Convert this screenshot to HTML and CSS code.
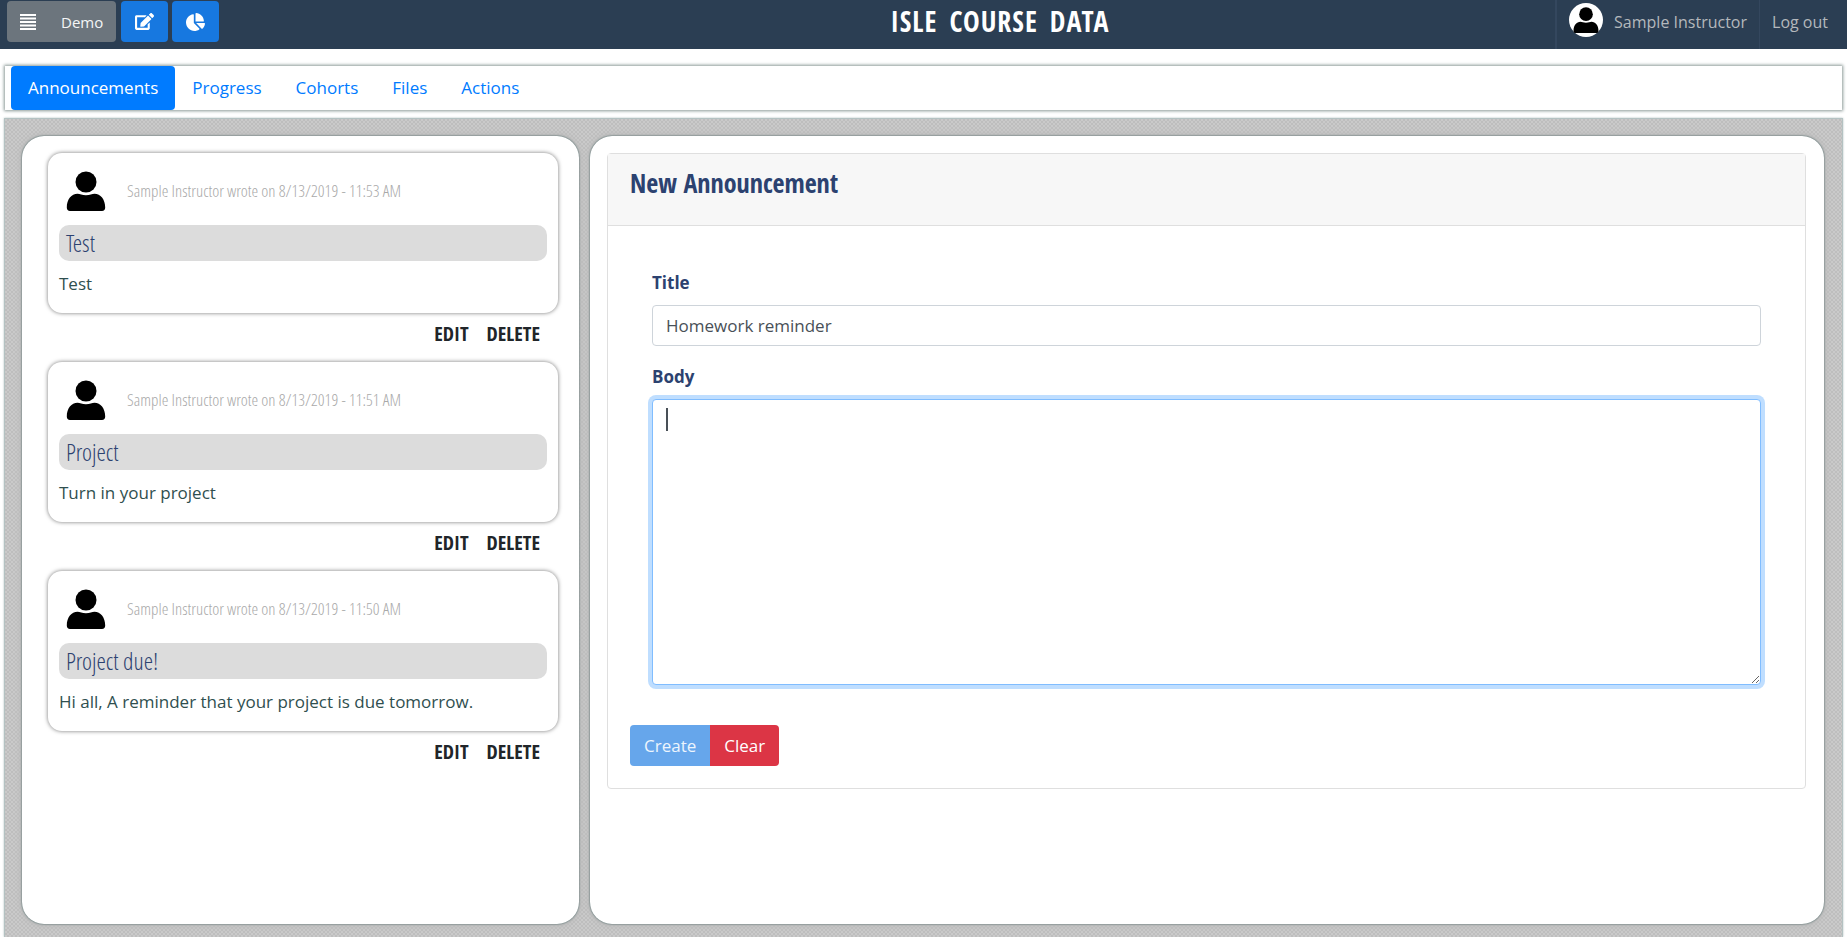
FILE: index.html
```html
<!DOCTYPE html>
<html lang="en">
<head>
<meta charset="utf-8">
<title>ISLE Course Data</title>
<link rel="stylesheet" href="styles.css">
</head>
<body>
<svg class="symbols" aria-hidden="true">
  <symbol id="person" viewBox="0 0 40 40">
    <circle cx="20" cy="11" r="10.5"/>
    <path d="M4 40C2 40 .8 38.800 .8 36.500C.8 28.500 5.500 22.800 11.500 22.800C14 22.800 16 24.300 20 24.300C24 24.300 26 22.800 28.500 22.800C34.500 22.800 39.200 28.500 39.200 36.500C39.200 38.800 38 40 36 40Z"/>
  </symbol>
</svg>

<header class="topbar">
  <div class="topbar-tools">
    <button class="tool tool-demo" type="button">
      <svg class="icon-list" viewBox="0 0 16 16" aria-hidden="true"><path d="M0 0h16v2H0zM0 3.500h16v2H0zM0 7h16v2H0zM0 10.500h16v2H0zM0 14h16v2H0z"/></svg>
      <span>Demo</span>
    </button>
    <button class="tool tool-blue" type="button" aria-label="Edit">
      <svg class="icon-edit" viewBox="0 0 576 512" aria-hidden="true"><path d="M402.600 83.200l90.200 90.200c3.800 3.800 3.800 10 0 13.800L274.400 405.600l-92.800 10.300c-12.400 1.400-22.900-9.100-21.500-21.500l10.300-92.800L388.800 83.200c3.800-3.800 10-3.800 13.800 0zm162-22.900l-48.800-48.800c-15.200-15.200-39.900-15.200-55.200 0l-35.400 35.400c-3.800 3.800-3.800 10 0 13.800l90.200 90.200c3.800 3.800 10 3.800 13.800 0l35.400-35.400c15.200-15.300 15.200-40 0-55.200zM384 346.200V448H64V128h229.800c3.200 0 6.200-1.300 8.500-3.500l40-40c7.600-7.600 2.200-20.500-8.500-20.500H48C21.500 64 0 85.500 0 112v352c0 26.500 21.500 48 48 48h352c26.500 0 48-21.500 48-48V306.200c0-10.700-12.900-16-20.500-8.500l-40 40c-2.200 2.300-3.500 5.300-3.500 8.500z"/></svg>
    </button>
    <button class="tool tool-blue" type="button" aria-label="Statistics">
      <svg class="icon-pie" viewBox="0 0 544 512" aria-hidden="true"><path d="M527.790 288H290.500l158.030 158.030c6.040 6.040 15.980 6.530 22.190.68 38.700-36.460 65.320-85.610 73.130-140.860 1.340-9.460-6.510-17.850-16.060-17.850zm-15.830-64.800C503.720 103.740 408.260 8.280 288.800.040 279.680-.59 272 7.100 272 16.240V240h223.770c9.140 0 16.820-7.680 16.190-16.800zM224 288V50.710c0-9.550-8.390-17.400-17.840-16.060C86.990 51.490-4.100 155.600.14 280.370 4.500 408.510 114.830 513.590 243.030 511.980c50.400-.63 96.970-16.870 135.260-44.030 7.900-5.600 8.420-17.230 1.570-24.080L224 288z"/></svg>
    </button>
  </div>
  <h1 class="topbar-title">ISLE COURSE DATA</h1>
  <div class="topbar-user">
    <a class="user-link" href="#profile">
      <span class="user-avatar"><svg viewBox="0 0 40 40" aria-hidden="true"><use href="#person"/></svg></span>
      Sample Instructor
    </a>
    <a class="user-link user-logout" href="#logout">Log out</a>
  </div>
</header>

<nav class="tabs">
  <a class="tab tab-active" href="#announcements">Announcements</a>
  <a class="tab" href="#progress">Progress</a>
  <a class="tab" href="#cohorts">Cohorts</a>
  <a class="tab" href="#files">Files</a>
  <a class="tab" href="#actions">Actions</a>
</nav>

<main class="board">
  <section class="panel feed">
    <article class="post">
      <div class="post-card">
        <div class="post-head">
          <svg class="post-avatar" viewBox="0 0 40 40" aria-hidden="true"><use href="#person"/></svg>
          <span>Sample Instructor wrote on 8/13/2019 - 11:53 AM</span>
        </div>
        <h2 class="post-title">Test</h2>
        <p class="post-body">Test</p>
      </div>
      <div class="post-actions"><button type="button">EDIT</button><button type="button">DELETE</button></div>
    </article>
    <article class="post">
      <div class="post-card">
        <div class="post-head">
          <svg class="post-avatar" viewBox="0 0 40 40" aria-hidden="true"><use href="#person"/></svg>
          <span>Sample Instructor wrote on 8/13/2019 - 11:51 AM</span>
        </div>
        <h2 class="post-title">Project</h2>
        <p class="post-body">Turn in your project</p>
      </div>
      <div class="post-actions"><button type="button">EDIT</button><button type="button">DELETE</button></div>
    </article>
    <article class="post">
      <div class="post-card">
        <div class="post-head">
          <svg class="post-avatar" viewBox="0 0 40 40" aria-hidden="true"><use href="#person"/></svg>
          <span>Sample Instructor wrote on 8/13/2019 - 11:50 AM</span>
        </div>
        <h2 class="post-title">Project due!</h2>
        <p class="post-body">Hi all, A reminder that your project is due tomorrow.</p>
      </div>
      <div class="post-actions"><button type="button">EDIT</button><button type="button">DELETE</button></div>
    </article>
  </section>

  <section class="panel editor">
    <form class="form-card">
      <h2 class="form-header">New Announcement</h2>
      <div class="form-fields">
        <label class="field-label" for="title">Title</label>
        <input class="field" id="title" type="text" value="Homework reminder">
        <label class="field-label" for="body">Body</label>
        <div class="field-wrap">
          <textarea class="field field-body field-focused" id="body"></textarea>
          <span class="caret"></span>
        </div>
      </div>
      <div class="form-actions">
        <button class="btn btn-create" type="button" disabled>Create</button><button class="btn btn-clear" type="button">Clear</button>
      </div>
    </form>
  </section>
</main>
</body>
</html>
```
FILE: styles.css
```css
* {
  box-sizing: border-box;
}

body {
  margin: 0;
  min-height: 100vh;
  display: flex;
  flex-direction: column;
  background: #fff;
  font-family: "Open Sans", sans-serif;
  font-size: 17px;
  line-height: 26px;
  color: #2f4f4f;
}

h1, h2, p {
  margin: 0;
}

a {
  text-decoration: none;
}

button, input, textarea {
  font: inherit;
}

.symbols {
  display: none;
}

/* Top bar */
.topbar {
  display: grid;
  grid-template-columns: 891fr auto 738fr;
  height: 49px;
  background: #2b3e53;
}

.topbar-tools {
  display: flex;
  align-items: flex-start;
  gap: 4px;
  padding: 1px 7px;
}

.tool {
  display: flex;
  align-items: center;
  justify-content: center;
  height: 41px;
  padding: 0;
  border: 0;
  border-radius: 4px;
  color: #f4f5f6;
  fill: #fff;
}

.tool-demo {
  gap: 25px;
  padding: 0 13px;
  margin-right: 1px;
  background: #6c757d;
  font-size: 15px;
}

.tool-blue {
  width: 47px;
  background: #1778e0;
}

.icon-list {
  width: 16px;
  height: 16px;
}

.icon-edit {
  width: 19px;
  height: 17px;
}

.icon-pie {
  width: 19px;
  height: 18px;
}

.topbar-title {
  font-family: "Open Sans Condensed", "Open Sans", sans-serif;
  font-size: 28px;
  font-weight: 700;
  line-height: 42px;
  letter-spacing: 1px;
  word-spacing: 4px;
  color: #fff;
}

.topbar-user {
  display: flex;
  justify-content: flex-end;
}

.user-link {
  display: flex;
  gap: 11px;
  padding: 0 12px;
  border-left: 2px solid #34475e;
  font-size: 16px;
  line-height: 44px;
  color: #b4b8bc;
}

.user-logout {
  padding-right: 19px;
  border-left-width: 1px;
}

.user-avatar {
  display: grid;
  place-items: center;
  width: 34px;
  height: 34px;
  margin-top: 3px;
  border-radius: 50%;
  background: #fff;
  fill: #000;
}

.user-avatar svg {
  width: 26px;
  height: 26px;
}

/* Tabs */
.tabs {
  display: flex;
  margin: 17px 5px 0;
  padding: 0 6px;
  background: #fff;
  box-shadow: 0 0 3px 1px #8a9896;
}

.tab {
  padding: 9px 17px;
  border-radius: 4px;
  color: #007bff;
}

.tab-active {
  color: #fff;
  background: #007bff;
}

/* Board */
.board {
  flex: 1;
  display: grid;
  grid-template-columns: 557fr 1234fr;
  gap: 11px;
  margin: 8px 4px 0;
  padding: 17px 18px 13px 17px;
  border: 1px solid #b4c2c2;
  border-bottom: 0;
  box-shadow: 0 0 2px #b4c2c2;
  background-color: #cacaca;
  background-image: conic-gradient(#bebebe 25%, transparent 0 50%, #bebebe 0 75%, transparent 0);
  background-size: 4px 4px;
}

.panel {
  border-radius: 22px;
  background: #fff;
  box-shadow: 0 0 2px #2f4f4f, 0 0 5px 3px #bdbdbd;
}

/* Announcement feed */
.feed {
  padding: 17px 21px 17px 26px;
}

.post-card {
  padding: 18px 11px 16px;
  border-radius: 14px;
  background: #fff;
  box-shadow: 0 0 4px #777;
}

.post-head {
  display: flex;
  align-items: center;
  gap: 21px;
  padding: 0 7px;
  font-family: "Open Sans Condensed Light", "Open Sans", sans-serif;
  font-weight: 300;
  color: #a9a9a9;
}

.post-avatar {
  width: 40px;
  height: 40px;
  fill: #000;
}

.post-title {
  margin-top: 14px;
  padding: 0 7px;
  border-radius: 10px;
  background: #dcdcdc;
  font-family: "Open Sans Condensed Light", "Open Sans", sans-serif;
  font-size: 24px;
  font-weight: 300;
  line-height: 36px;
  color: #2c4270;
}

.post-body {
  margin-top: 10px;
}

.post-actions {
  display: flex;
  justify-content: flex-end;
  gap: 18px;
  padding: 7px 18px 14px;
}

.post-actions button {
  padding: 0;
  border: 0;
  background: none;
  font-family: "Open Sans Condensed", "Open Sans", sans-serif;
  font-size: 20px;
  font-weight: 700;
  line-height: 28px;
  color: #212529;
}

/* Editor */
.editor {
  padding: 17px 18px 17px 17px;
}

.form-card {
  border: 1px solid #dfdfdf;
  border-radius: 4px;
}

.form-header {
  padding: 13px 22px 26px;
  border-bottom: 1px solid #dfdfdf;
  background: #f7f7f7;
  font-family: "Open Sans Condensed", "Open Sans", sans-serif;
  font-size: 26px;
  font-weight: 700;
  line-height: 32px;
  color: #2c4270;
}

.form-fields {
  display: flex;
  flex-direction: column;
  padding: 44px 44px 0;
}

.field-label {
  margin-bottom: 9px;
  font-weight: 700;
  color: #2c4270;
}

.field {
  display: block;
  width: 100%;
  padding: 6px 13px;
  border: 1px solid #ced4da;
  border-radius: 4px;
  background: #fff;
  color: #495057;
  outline: 0;
}

input.field {
  height: 41px;
  margin-bottom: 18px;
}

.field-wrap {
  position: relative;
}

.field-body {
  height: 286px;
  resize: vertical;
}

.field-focused {
  border-color: #80bdff;
  box-shadow: 0 0 0 4px #bfdeff;
}

.caret {
  position: absolute;
  top: 9px;
  left: 14px;
  width: 2px;
  height: 23px;
  background: #495057;
}

.form-actions {
  display: flex;
  padding: 40px 22px 22px;
}

.btn {
  height: 41px;
  padding: 0 14px;
  border: 0;
  color: #fff;
}

.btn-create {
  border-radius: 4px 0 0 4px;
  background: #66a6eb;
  color: #edf5fd;
}

.btn-clear {
  border-radius: 0 4px 4px 0;
  background: #dc3545;
}
```
